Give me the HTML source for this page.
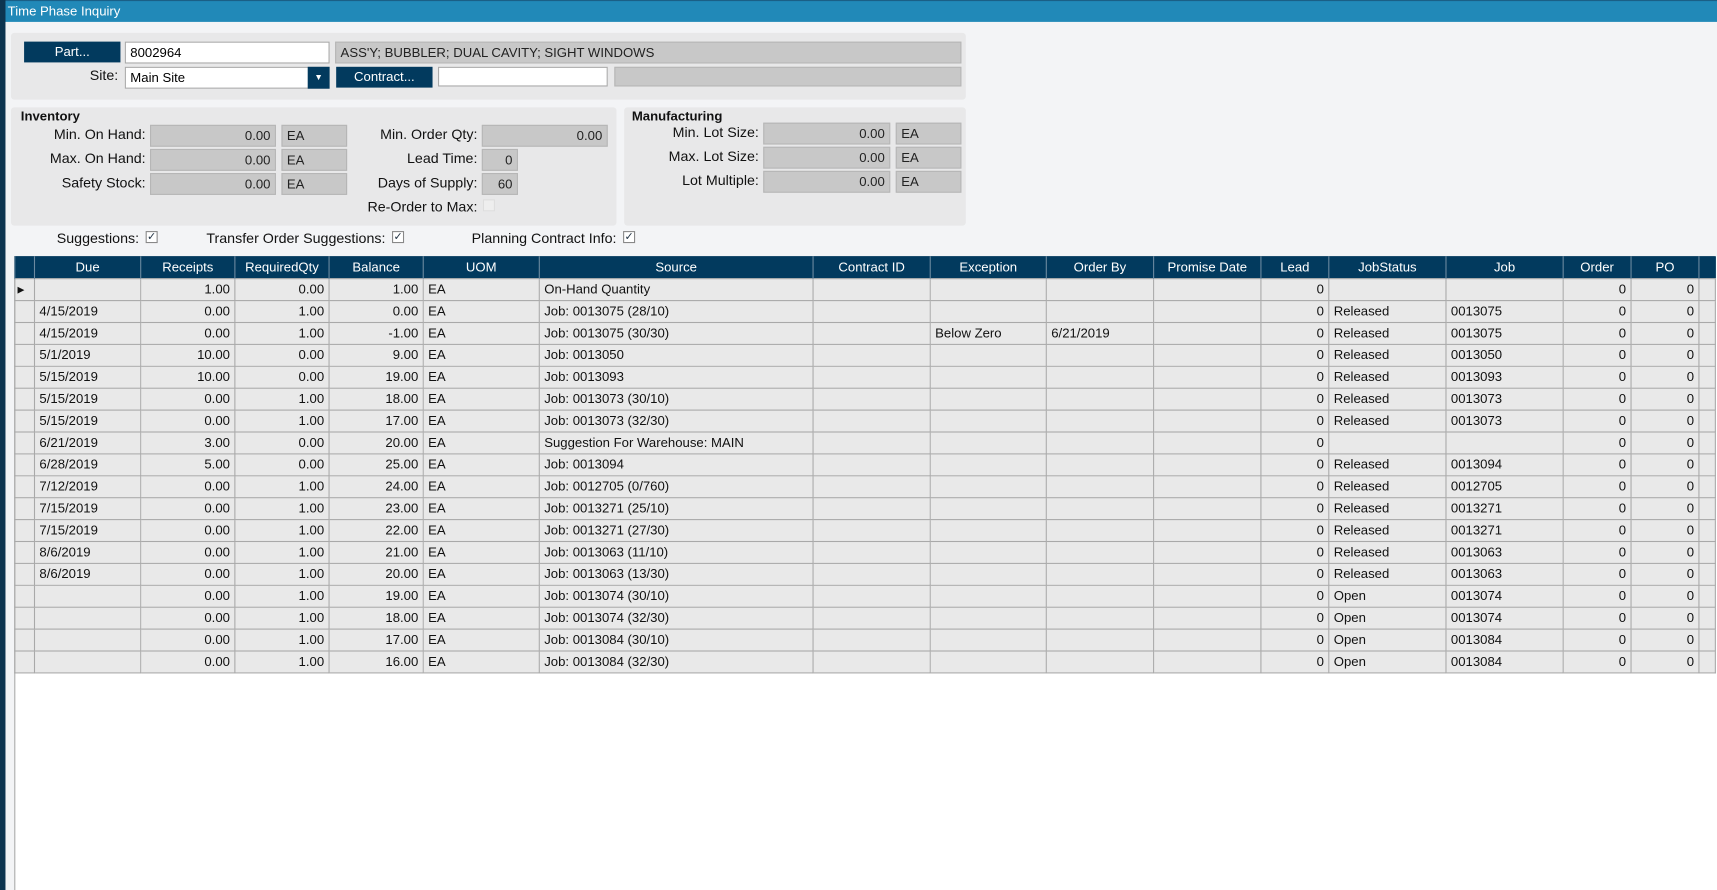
<!DOCTYPE html>
<html><head><meta charset="utf-8"><style>
*{margin:0;padding:0;box-sizing:border-box}
body{width:1717px;height:890px;overflow:hidden;background:#f3f4f6;font-family:"Liberation Sans",sans-serif}
#w{position:absolute;left:0;top:0;width:1568px;height:813px;transform:scale(1.09503);transform-origin:0 0;background:#f3f4f6}
.a{position:absolute}
.t{font-size:12.5px;color:#111;white-space:nowrap}
.lbl{font-size:13px;color:#111;text-align:right;white-space:nowrap;position:absolute}
.btn{position:absolute;background:#023a5e;color:#fff;font-size:12px;text-align:center;line-height:19px}
.ro{position:absolute;background:#c8c8c8;border:1px solid #b6b6b6;font-size:12px;line-height:18px;padding:0 4px;color:#222}
.r{text-align:right}
.in{position:absolute;background:#fff;border:1px solid #aaa;font-size:12px;line-height:18px;padding:0 4px}
.cb{position:absolute;width:11px;height:11px;border:1px solid #888;background:#fff;font-size:10px;line-height:9px;text-align:center;color:#234}
table{position:absolute;left:13px;top:234px;border-collapse:collapse;table-layout:fixed;font-size:12px}
th{background:#023a5e;color:#fff;font-weight:normal;height:20px;border-left:1px solid #6c8aa0;font-size:12px}
td{background:#e9e9e9;height:20px;border:1px solid #a9a9a9;padding:0 4px;white-space:nowrap;overflow:hidden;color:#111}
td.n{text-align:right}
</style></head><body><div id="w">
<div class="a" style="left:0;top:0;width:1568px;height:20px;background:#2189b8;border-top:1px solid #1a5f86"></div>
<div class="a t" style="left:7px;top:3px;color:#fff;font-size:12px">Time Phase Inquiry</div>
<div class="a" style="left:0;top:0;width:5px;height:813px;background:#0d3550"></div>
<div class="a" style="left:10px;top:30px;width:872px;height:61px;background:#e8e8e9;border-radius:3px"></div>
<div class="btn" style="left:22px;top:38px;width:88px">Part...</div>
<div class="in" style="left:114px;top:38px;width:187px">8002964</div>
<div class="ro" style="left:306px;top:38px;width:572px">ASS'Y; BUBBLER; DUAL CAVITY; SIGHT WINDOWS</div>
<div class="lbl" style="left:60px;top:61px;width:48px">Site:</div>
<div class="in" style="left:114px;top:61px;width:187px;height:20px">Main Site</div>
<div class="a" style="left:281px;top:61px;width:20px;height:20px;background:#023a5e;color:#fff;font-size:8px;text-align:center;line-height:20px">▼</div>
<div class="btn" style="left:307px;top:61px;width:88px;height:19px">Contract...</div>
<div class="in" style="left:400px;top:61px;width:155px;height:18px"></div>
<div class="ro" style="left:561px;top:61px;width:317px;height:18px"></div>
<div class="a" style="left:10px;top:98px;width:553px;height:108px;background:#e8e8e9;border-radius:3px"></div>
<div class="a" style="left:570px;top:98px;width:312px;height:108px;background:#e8e8e9;border-radius:3px"></div>
<div class="a t" style="left:19px;top:99px;font-weight:bold;font-size:12px">Inventory</div>
<div class="a t" style="left:577px;top:99px;font-weight:bold;font-size:12px">Manufacturing</div>
<div class="lbl" style="left:20px;top:115px;width:113px">Min. On Hand:</div>
<div class="lbl" style="left:20px;top:137px;width:113px">Max. On Hand:</div>
<div class="lbl" style="left:20px;top:159px;width:113px">Safety Stock:</div>
<div class="ro r" style="left:137px;top:114px;width:115px">0.00</div>
<div class="ro r" style="left:137px;top:136px;width:115px">0.00</div>
<div class="ro r" style="left:137px;top:158px;width:115px">0.00</div>
<div class="ro" style="left:257px;top:114px;width:60px">EA</div>
<div class="ro" style="left:257px;top:136px;width:60px">EA</div>
<div class="ro" style="left:257px;top:158px;width:60px">EA</div>
<div class="lbl" style="left:300px;top:115px;width:136px">Min. Order Qty:</div>
<div class="lbl" style="left:300px;top:137px;width:136px">Lead Time:</div>
<div class="lbl" style="left:300px;top:159px;width:136px">Days of Supply:</div>
<div class="lbl" style="left:300px;top:181px;width:136px">Re-Order to Max:</div>
<div class="ro r" style="left:440px;top:114px;width:115px">0.00</div>
<div class="ro r" style="left:440px;top:136px;width:33px">0</div>
<div class="ro r" style="left:440px;top:158px;width:33px">60</div>
<div class="a" style="left:441px;top:182px;width:11px;height:11px;border:1px solid #ddd;background:#eee"></div>
<div class="lbl" style="left:580px;top:113px;width:113px">Min. Lot Size:</div>
<div class="lbl" style="left:580px;top:135px;width:113px">Max. Lot Size:</div>
<div class="lbl" style="left:580px;top:157px;width:113px">Lot Multiple:</div>
<div class="ro r" style="left:697px;top:112px;width:116px">0.00</div>
<div class="ro r" style="left:697px;top:134px;width:116px">0.00</div>
<div class="ro r" style="left:697px;top:156px;width:116px">0.00</div>
<div class="ro" style="left:818px;top:112px;width:60px">EA</div>
<div class="ro" style="left:818px;top:134px;width:60px">EA</div>
<div class="ro" style="left:818px;top:156px;width:60px">EA</div>
<div class="lbl" style="left:20px;top:210px;width:107px">Suggestions:</div>
<div class="cb" style="left:133px;top:211px">✓</div>
<div class="lbl" style="left:160px;top:210px;width:192px">Transfer Order Suggestions:</div>
<div class="cb" style="left:358px;top:211px">✓</div>
<div class="lbl" style="left:400px;top:210px;width:163px">Planning Contract Info:</div>
<div class="cb" style="left:569px;top:211px">✓</div>
<div class="a" style="left:13px;top:234px;width:1555px;height:579px;background:#fff;border-left:1px solid #aaa"></div>
<div class="a" style="left:13px;top:234px;width:1553px;height:20px;background:#023a5e"></div>
<table>
<colgroup><col style="width:18px"><col style="width:97px"><col style="width:86px"><col style="width:86px"><col style="width:86px"><col style="width:106px"><col style="width:250px"><col style="width:107px"><col style="width:106px"><col style="width:98px"><col style="width:98px"><col style="width:62px"><col style="width:107px"><col style="width:107px"><col style="width:62px"><col style="width:62px"><col style="width:15px"></colgroup>
<tr><th></th><th>Due</th><th>Receipts</th><th>RequiredQty</th><th>Balance</th><th>UOM</th><th>Source</th><th>Contract ID</th><th>Exception</th><th>Order By</th><th>Promise Date</th><th>Lead</th><th>JobStatus</th><th>Job</th><th>Order</th><th>PO</th><th></th></tr>
<tr><td style="font-size:8px;padding:0 2px">▶</td><td></td><td class="n">1.00</td><td class="n">0.00</td><td class="n">1.00</td><td>EA</td><td>On-Hand Quantity</td><td></td><td></td><td></td><td></td><td class="n">0</td><td></td><td></td><td class="n">0</td><td class="n">0</td><td></td></tr>
<tr><td></td><td>4/15/2019</td><td class="n">0.00</td><td class="n">1.00</td><td class="n">0.00</td><td>EA</td><td>Job: 0013075 (28/10)</td><td></td><td></td><td></td><td></td><td class="n">0</td><td>Released</td><td>0013075</td><td class="n">0</td><td class="n">0</td><td></td></tr>
<tr><td></td><td>4/15/2019</td><td class="n">0.00</td><td class="n">1.00</td><td class="n">-1.00</td><td>EA</td><td>Job: 0013075 (30/30)</td><td></td><td>Below Zero</td><td>6/21/2019</td><td></td><td class="n">0</td><td>Released</td><td>0013075</td><td class="n">0</td><td class="n">0</td><td></td></tr>
<tr><td></td><td>5/1/2019</td><td class="n">10.00</td><td class="n">0.00</td><td class="n">9.00</td><td>EA</td><td>Job: 0013050</td><td></td><td></td><td></td><td></td><td class="n">0</td><td>Released</td><td>0013050</td><td class="n">0</td><td class="n">0</td><td></td></tr>
<tr><td></td><td>5/15/2019</td><td class="n">10.00</td><td class="n">0.00</td><td class="n">19.00</td><td>EA</td><td>Job: 0013093</td><td></td><td></td><td></td><td></td><td class="n">0</td><td>Released</td><td>0013093</td><td class="n">0</td><td class="n">0</td><td></td></tr>
<tr><td></td><td>5/15/2019</td><td class="n">0.00</td><td class="n">1.00</td><td class="n">18.00</td><td>EA</td><td>Job: 0013073 (30/10)</td><td></td><td></td><td></td><td></td><td class="n">0</td><td>Released</td><td>0013073</td><td class="n">0</td><td class="n">0</td><td></td></tr>
<tr><td></td><td>5/15/2019</td><td class="n">0.00</td><td class="n">1.00</td><td class="n">17.00</td><td>EA</td><td>Job: 0013073 (32/30)</td><td></td><td></td><td></td><td></td><td class="n">0</td><td>Released</td><td>0013073</td><td class="n">0</td><td class="n">0</td><td></td></tr>
<tr><td></td><td>6/21/2019</td><td class="n">3.00</td><td class="n">0.00</td><td class="n">20.00</td><td>EA</td><td>Suggestion For Warehouse: MAIN</td><td></td><td></td><td></td><td></td><td class="n">0</td><td></td><td></td><td class="n">0</td><td class="n">0</td><td></td></tr>
<tr><td></td><td>6/28/2019</td><td class="n">5.00</td><td class="n">0.00</td><td class="n">25.00</td><td>EA</td><td>Job: 0013094</td><td></td><td></td><td></td><td></td><td class="n">0</td><td>Released</td><td>0013094</td><td class="n">0</td><td class="n">0</td><td></td></tr>
<tr><td></td><td>7/12/2019</td><td class="n">0.00</td><td class="n">1.00</td><td class="n">24.00</td><td>EA</td><td>Job: 0012705 (0/760)</td><td></td><td></td><td></td><td></td><td class="n">0</td><td>Released</td><td>0012705</td><td class="n">0</td><td class="n">0</td><td></td></tr>
<tr><td></td><td>7/15/2019</td><td class="n">0.00</td><td class="n">1.00</td><td class="n">23.00</td><td>EA</td><td>Job: 0013271 (25/10)</td><td></td><td></td><td></td><td></td><td class="n">0</td><td>Released</td><td>0013271</td><td class="n">0</td><td class="n">0</td><td></td></tr>
<tr><td></td><td>7/15/2019</td><td class="n">0.00</td><td class="n">1.00</td><td class="n">22.00</td><td>EA</td><td>Job: 0013271 (27/30)</td><td></td><td></td><td></td><td></td><td class="n">0</td><td>Released</td><td>0013271</td><td class="n">0</td><td class="n">0</td><td></td></tr>
<tr><td></td><td>8/6/2019</td><td class="n">0.00</td><td class="n">1.00</td><td class="n">21.00</td><td>EA</td><td>Job: 0013063 (11/10)</td><td></td><td></td><td></td><td></td><td class="n">0</td><td>Released</td><td>0013063</td><td class="n">0</td><td class="n">0</td><td></td></tr>
<tr><td></td><td>8/6/2019</td><td class="n">0.00</td><td class="n">1.00</td><td class="n">20.00</td><td>EA</td><td>Job: 0013063 (13/30)</td><td></td><td></td><td></td><td></td><td class="n">0</td><td>Released</td><td>0013063</td><td class="n">0</td><td class="n">0</td><td></td></tr>
<tr><td></td><td></td><td class="n">0.00</td><td class="n">1.00</td><td class="n">19.00</td><td>EA</td><td>Job: 0013074 (30/10)</td><td></td><td></td><td></td><td></td><td class="n">0</td><td>Open</td><td>0013074</td><td class="n">0</td><td class="n">0</td><td></td></tr>
<tr><td></td><td></td><td class="n">0.00</td><td class="n">1.00</td><td class="n">18.00</td><td>EA</td><td>Job: 0013074 (32/30)</td><td></td><td></td><td></td><td></td><td class="n">0</td><td>Open</td><td>0013074</td><td class="n">0</td><td class="n">0</td><td></td></tr>
<tr><td></td><td></td><td class="n">0.00</td><td class="n">1.00</td><td class="n">17.00</td><td>EA</td><td>Job: 0013084 (30/10)</td><td></td><td></td><td></td><td></td><td class="n">0</td><td>Open</td><td>0013084</td><td class="n">0</td><td class="n">0</td><td></td></tr>
<tr><td></td><td></td><td class="n">0.00</td><td class="n">1.00</td><td class="n">16.00</td><td>EA</td><td>Job: 0013084 (32/30)</td><td></td><td></td><td></td><td></td><td class="n">0</td><td>Open</td><td>0013084</td><td class="n">0</td><td class="n">0</td><td></td></tr>
</table>
</div></body></html>
